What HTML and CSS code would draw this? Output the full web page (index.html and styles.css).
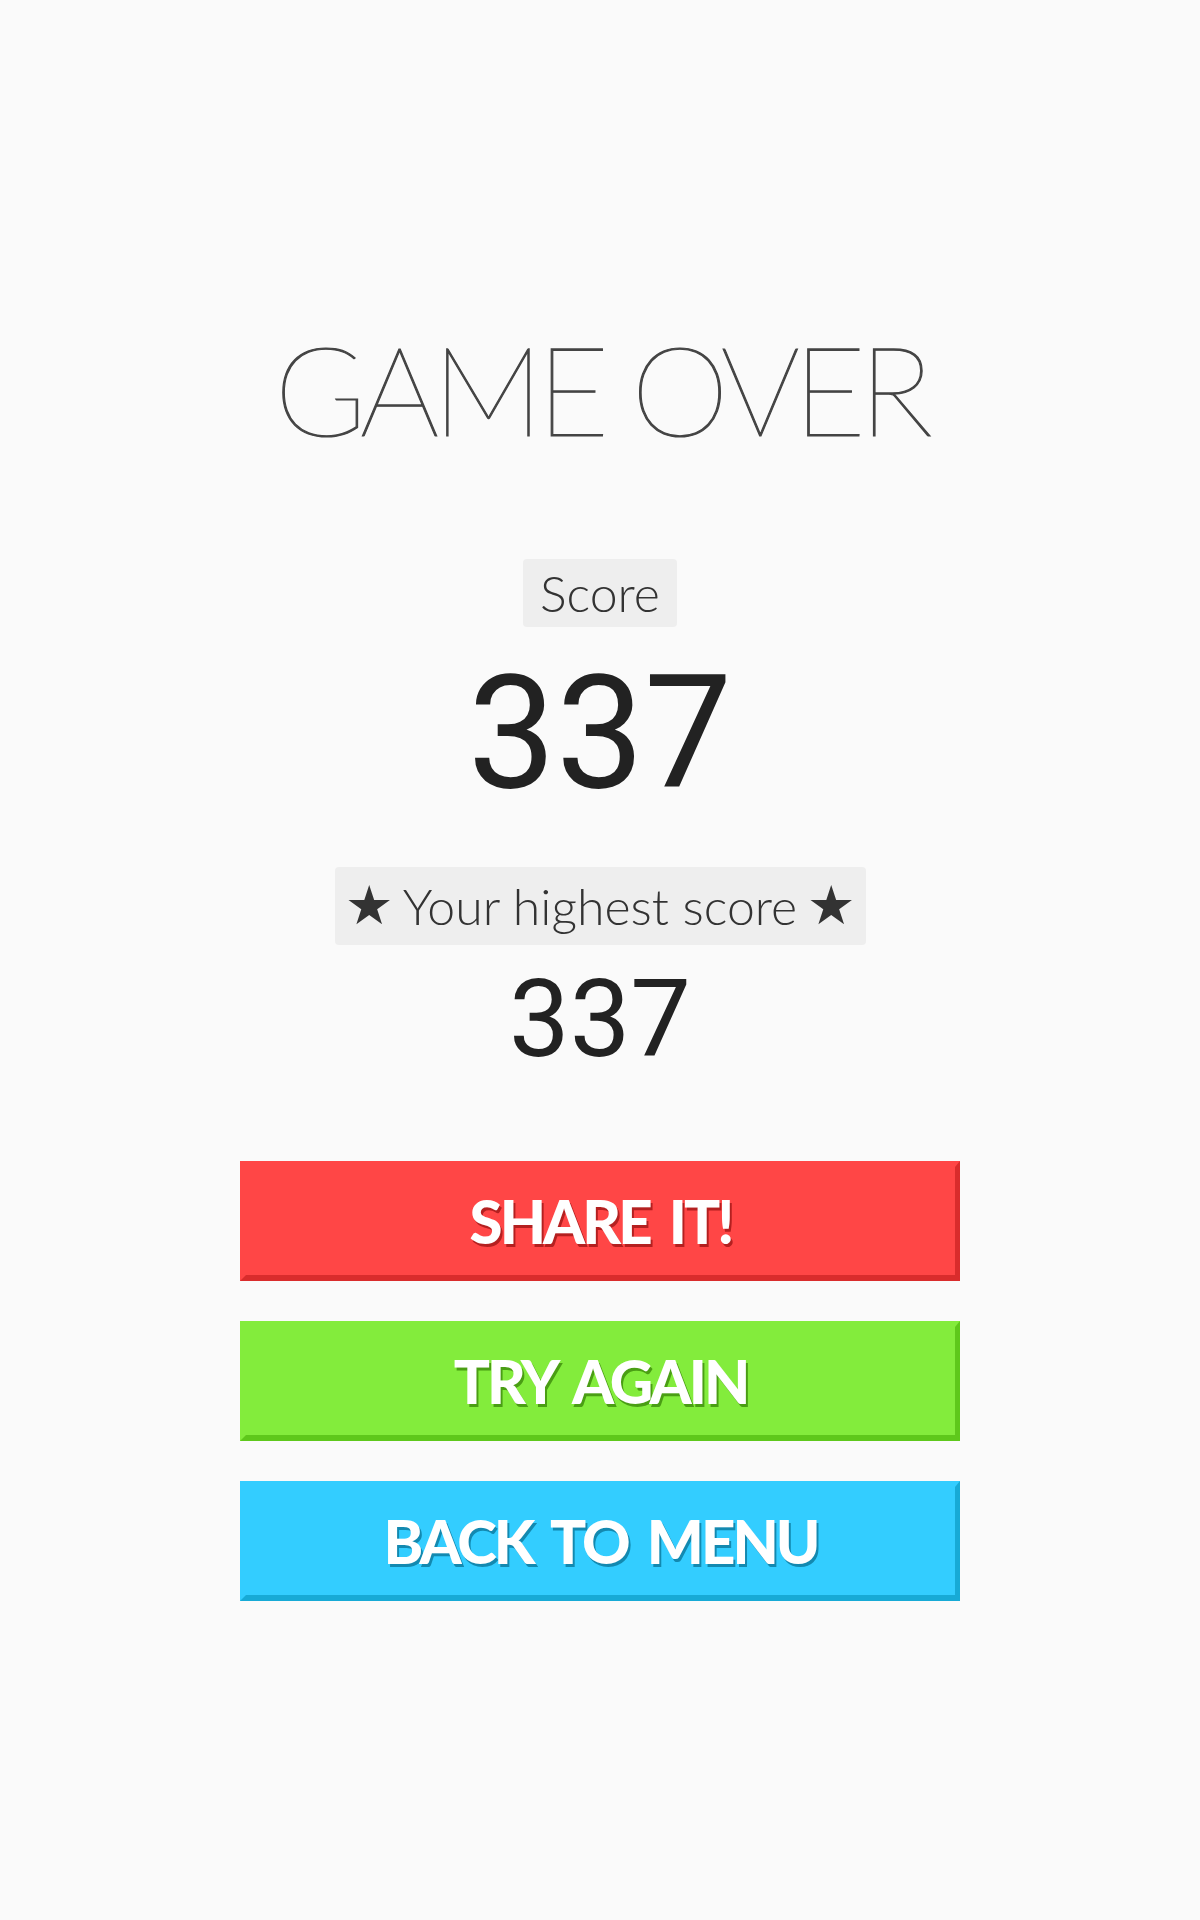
FILE: index.html
```html
<!DOCTYPE html>
<html>
<head>
<meta charset="utf-8">
<link rel="stylesheet" href="styles.css">
</head>
<body>
<main class="screen">
  <h1 class="title">GAME OVER</h1>
  <div class="label label-score">Score</div>
  <div class="score">337</div>
  <div class="label label-best"><span class="star">★</span> Your highest score <span class="star">★</span></div>
  <div class="best">337</div>
  <div class="buttons">
    <button class="btn btn-red">SHARE IT!</button>
    <button class="btn btn-green">TRY AGAIN</button>
    <button class="btn btn-blue">BACK TO MENU</button>
  </div>
</main>
</body>
</html>
```

FILE: styles.css
```css
html, body {
  margin: 0;
  padding: 0;
  background: #fafafa;
}
.screen {
  display: flex;
  flex-direction: column;
  align-items: center;
  padding-top: 326px;
  font-family: "Lato", "DejaVu Sans", sans-serif;
}
.title {
  margin: 0;
  font-family: "Lato", sans-serif;
  font-weight: 100;
  font-size: 125px;
  line-height: 1;
  color: #444;
  letter-spacing: -7px;
  -webkit-text-stroke: 1.2px #444;
}
.label {
  background: #eeeeee;
  border-radius: 4px;
  color: #333;
  font-weight: 300;
  line-height: 1;
  display: flex;
  align-items: center;
  justify-content: center;
}
.label-score {
  margin-top: 108px;
  width: 154px;
  height: 68px;
  font-size: 50px;
}
.label-best {
  margin-top: 55px;
  width: 531px;
  height: 78px;
  font-size: 50px;
  gap: 10px;
}
.star {
  font-family: "DejaVu Sans", sans-serif;
  font-size: 54px;
}
.score {
  font-family: "Roboto", sans-serif;
  font-size: 157px;
  line-height: 1;
  color: #222;
  margin-top: 28px;
}
.best {
  font-family: "Roboto", sans-serif;
  font-size: 108px;
  line-height: 1;
  color: #222;
  margin-top: 20px;
}
.buttons {
  margin-top: 88px;
  display: flex;
  flex-direction: column;
  gap: 40px;
}
.btn {
  width: 720px;
  height: 120px;
  box-sizing: border-box;
  border: 6px solid;
  border-right-width: 5px;
  border-radius: 0;
  padding: 0;
  color: #fff;
  font-family: "Lato", sans-serif;
  font-weight: 900;
  font-size: 60px;
  letter-spacing: -3px;
  word-spacing: 8px;
  cursor: pointer;
}
.btn-red {
  background: #ff4646;
  border-color: #ff4646 #d92c2c #d92c2c #ff4646;
  text-shadow: 2px 3px 0 #b42020;
}
.btn-green {
  background: #83ec3c;
  border-color: #83ec3c #5ec81b #5ec81b #83ec3c;
  text-shadow: 2px 3px 0 #4a9e14;
}
.btn-blue {
  background: #33cdff;
  border-color: #33cdff #17aad6 #17aad6 #33cdff;
  text-shadow: 2px 3px 0 #1389b0;
}
```
